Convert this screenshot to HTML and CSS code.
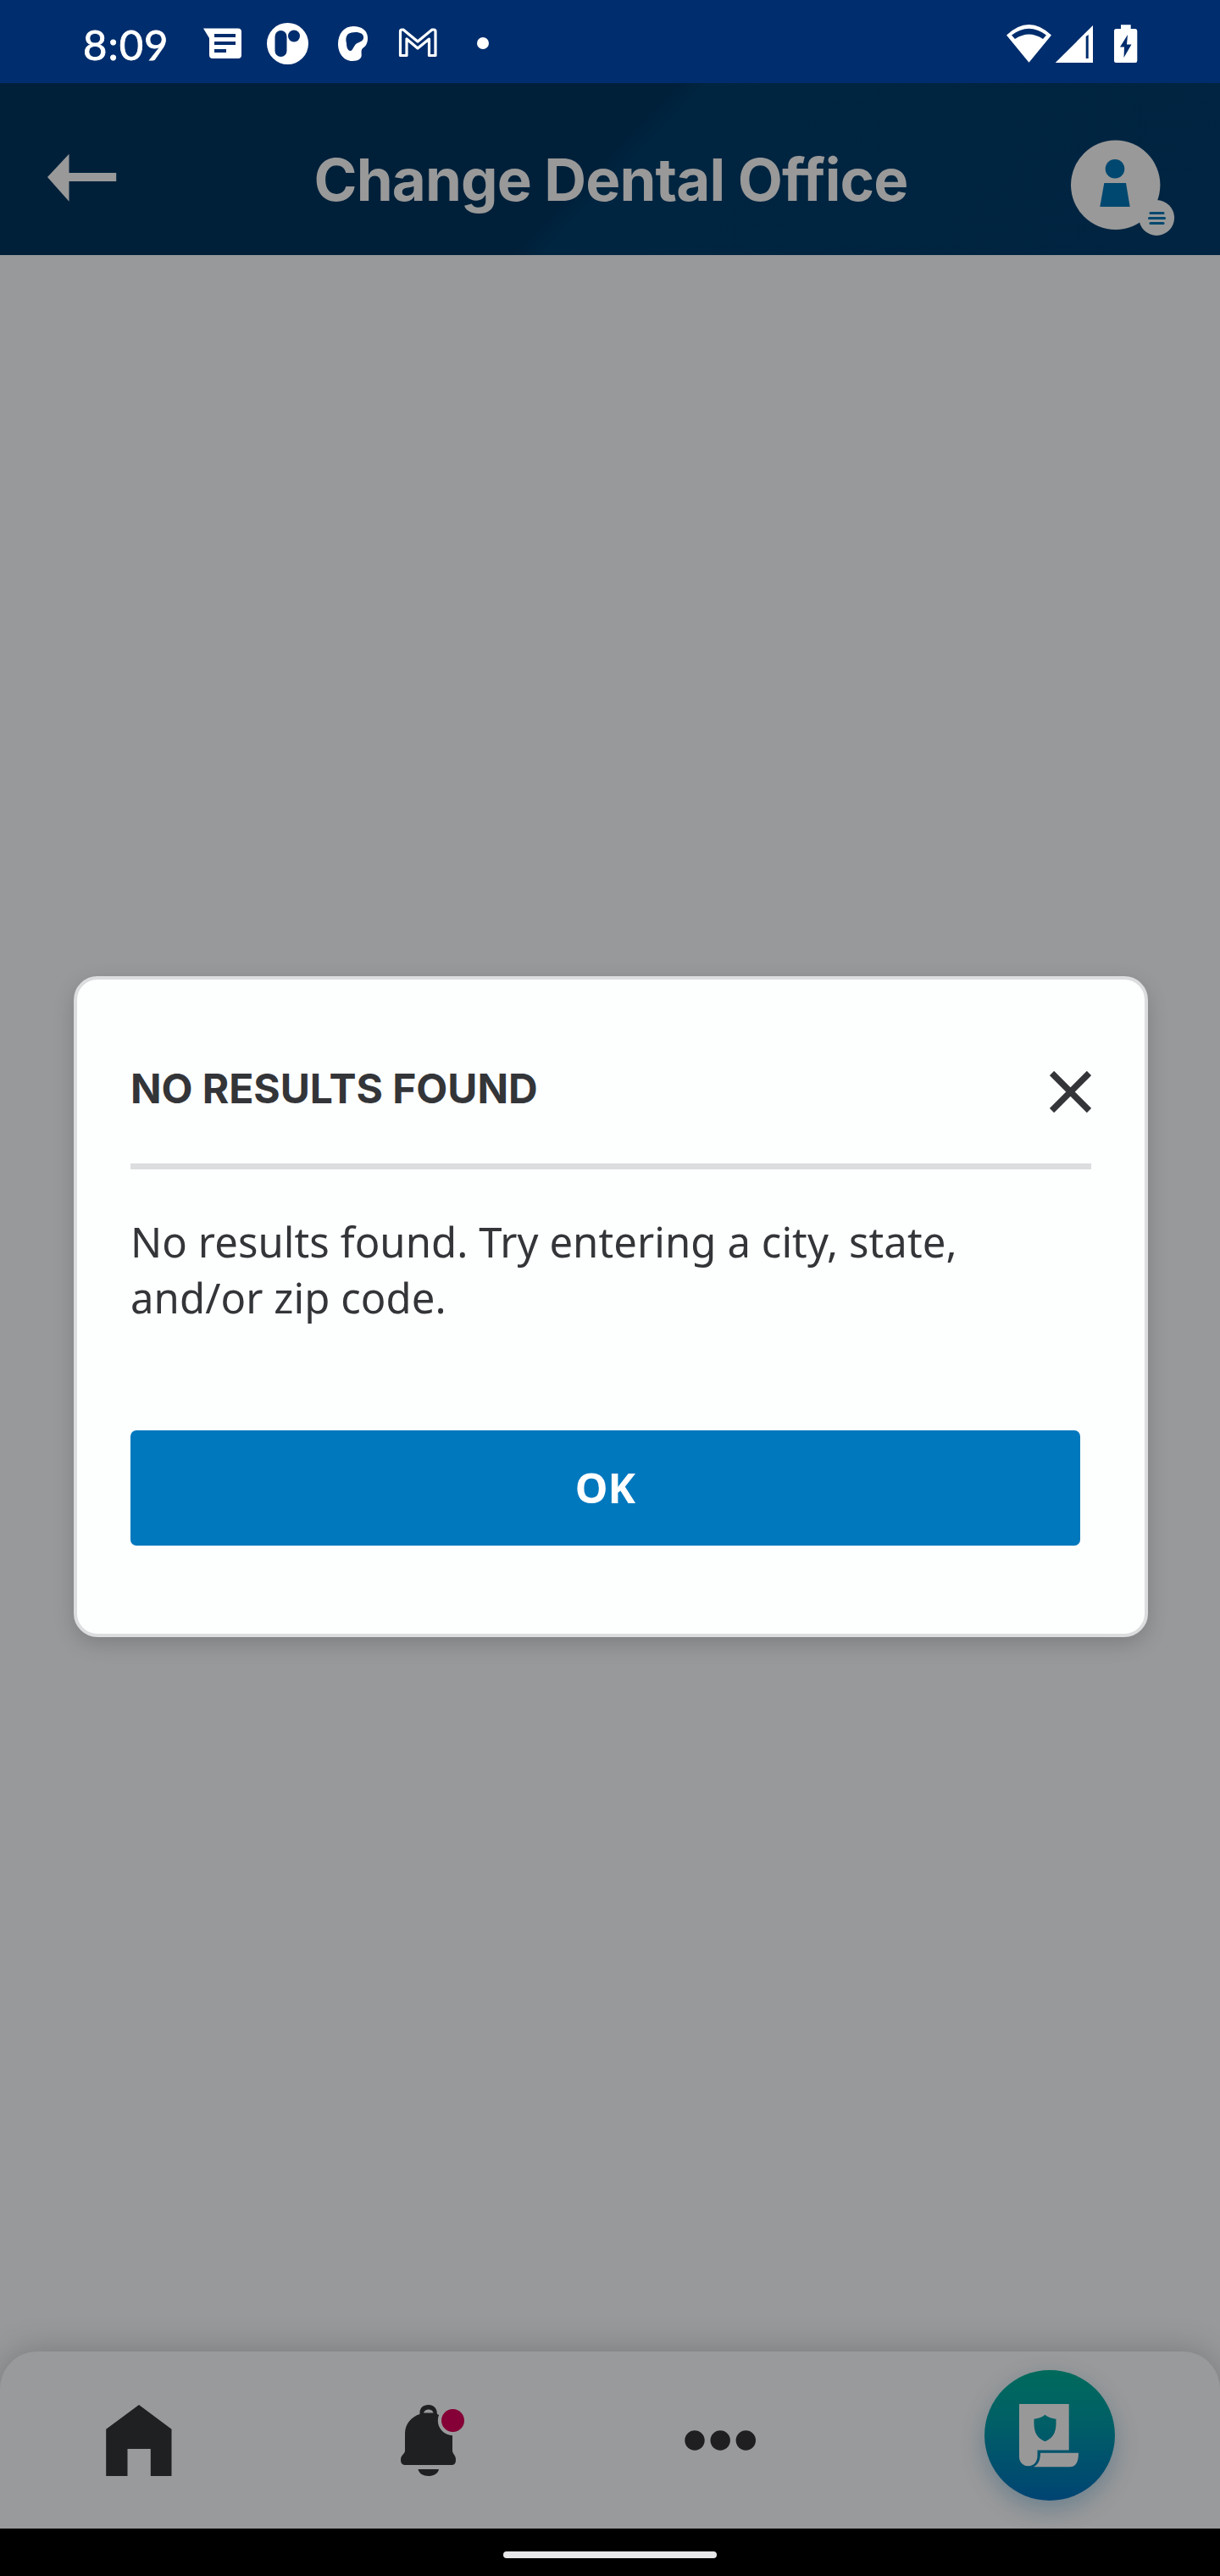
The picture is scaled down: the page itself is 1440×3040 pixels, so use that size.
FILE: index.html
```html
<!DOCTYPE html>
<html lang="en">
<head>
<meta charset="utf-8">
<title>Change Dental Office</title>
<link rel="stylesheet" href="styles.css">
</head>
<body>
<div class="screen">
  <div class="status-bar">
    <span class="clock">8:09</span>
    <svg class="notifications" width="340" height="50" viewBox="240 27 340 50">
      <path fill="#fff" fill-rule="evenodd" d="M240 33.5H281Q285 33.5 285 37.5V65Q285 69 281 69H251Q247 69 247 65V45ZM253 40V44H278V40ZM253 49V53H278V49ZM253 58V62H267V58Z"/>
      <circle cx="339.5" cy="51.5" r="24.5" fill="#fff"/>
      <rect x="324.500" y="36" width="14" height="31" rx="7" fill="#002d6d"/>
      <circle cx="347" cy="42.500" r="7" fill="#002d6d"/>
      <path fill="#fff" fill-rule="evenodd" d="M417 31C427 31 434 36 434 45C434 52 431 55 428 57C425 60 428 65 426 68C424 71 420 72 416 72C405 72 399 62 399 52C399 40 406 31 417 31ZM411 40C408 43 408 47 409 51C409 55 410 59 413 60C416 61 417 55 420 52C424 49 430 49 429 43C428 37 416 37 411 40Z"/>
      <path fill="none" stroke="#fff" stroke-width="3.200" stroke-linejoin="round" d="M472.500 37Q472.500 35 474.500 35H476L493 49L510 35H512Q514 35 514 37V65.500H506.500V46L493 57L480 46V65.500H472.500Z"/>
      <circle cx="570" cy="51" r="7" fill="#fff"/>
    </svg>
    <svg class="signals" width="155" height="46" viewBox="1188 28 155 46">
      <path fill="#fff" fill-rule="evenodd" d="M1188 40.500Q1214.500 15.500 1241 40.500L1214.500 72.700ZM1194 40.500L1198 45Q1214.500 34 1231 45L1235 40.500Q1214.500 25 1194 40.500Z"/>
      <path fill="#fff" fill-rule="evenodd" d="M1290 29V73H1245.700ZM1281.700 42V68H1284.700V40Z"/>
      <path fill="#fff" fill-rule="evenodd" d="M1323 28.300H1334.700V33H1340Q1342.300 33 1342.300 35.500V70.500Q1342.300 73 1340 73H1317.500Q1315 73 1315 70.500V35.500Q1315 33 1317.500 33H1323ZM1331 40L1322 54.500H1327L1326.500 67L1335.500 51.500H1330Z"/>
    </svg>
  </div>

  <header class="app-bar">
    <svg class="back" width="82" height="56" viewBox="56 182 82 56"><path fill="#999" d="M56 209L81.500 181.700V204H137.200V214H81.500V237.700Z"/></svg>
    <h1 class="app-title">Change Dental Office</h1>
    <svg class="avatar" width="123" height="114" viewBox="1264 165 123 114">
      <circle cx="1316.700" cy="218.300" r="52.700" fill="#999"/>
      <circle cx="1316" cy="199.300" r="11.300" fill="#00486f"/>
      <path fill="#00486f" d="M1303.300 216H1329L1333.700 244H1298.300Z"/>
      <circle cx="1365.200" cy="257" r="20.900" fill="#999"/>
      <path stroke="#00486f" stroke-width="3.200" stroke-linecap="round" d="M1358 251.500H1373M1356.500 257.500H1374.500M1358 263.500H1373"/>
    </svg>
  </header>

  <main class="content">
    <section class="dialog">
      <div class="dialog-head">
        <h2 class="dialog-title">NO RESULTS FOUND</h2>
        <svg class="close" width="49" height="49" viewBox="0 0 49 49"><path stroke="#333538" stroke-width="7.500" d="M2.500 2.500L46.500 46.500M46.500 2.500L2.500 46.500"/></svg>
      </div>
      <p class="dialog-text">No results found. Try entering a city, state,<br>and/or zip code.</p>
      <button class="ok">OK</button>
    </section>
  </main>

  <nav class="tabs">
    <svg class="tab-home" width="78" height="84" viewBox="125.500 2838 78 84"><path fill="#1e2022" d="M164.500 2838L203 2866.700V2922H178.300V2890H151V2922H125.700V2866.700Z"/></svg>
    <svg class="tab-bell" width="76" height="84" viewBox="473 2838 76 84">
      <path fill="#1e2022" fill-rule="evenodd" d="M495.500 2849C495 2842 499 2838 505.700 2838C512 2838 516 2842 516 2849C524 2852 534 2860 534 2872V2892C534 2896 538 2897 538 2903Q538 2909 533 2909H478.500Q473 2909 473 2903C473 2897 478 2896 478 2892V2872C478 2860 486 2852 495.500 2849ZM500 2847.500H511.500C510 2842 501.500 2842 500 2847.500Z"/>
      <path fill="#1e2022" d="M493.500 2914H518C517 2919 512 2922 505.700 2922C499.500 2922 494.500 2919 493.500 2914Z"/>
      <circle cx="534.500" cy="2856.500" r="17.700" fill="#999a9b"/>
      <circle cx="534.500" cy="2856.500" r="13.500" fill="#850036"/>
    </svg>
    <svg class="tab-more" width="84" height="24" viewBox="808 2868 84 24"><g fill="#1f1e21"><circle cx="820" cy="2880" r="11.700"/><circle cx="850.200" cy="2880" r="11.700"/><circle cx="880.300" cy="2880" r="11.700"/></g></svg>
    <div class="fab">
      <svg width="70" height="75" viewBox="1203 2836.700 70 75">
        <path fill="#999899" fill-rule="evenodd" d="M1203 2836.700H1261.700V2891.300H1224.500V2898C1224.500 2905 1220 2910 1214 2910C1207 2910 1203 2905 1203 2899ZM1233.500 2849.500C1229 2853 1224 2854 1220.500 2854.500C1220 2868 1222 2876 1233.500 2881C1245 2876 1247 2868 1246.500 2854.500C1243 2854 1238 2853 1233.500 2849.500Z"/>
        <path fill="#999899" d="M1228 2894.500H1273C1273 2905 1270 2911 1263 2911H1220C1226 2908 1228 2902 1228 2894.500Z"/>
      </svg>
    </div>
  </nav>
  <div class="gesture-bar"><div class="gesture-pill"></div></div>
</div>
</body>
</html>
```

FILE: styles.css
```css
* { box-sizing: border-box; }
body { margin: 0; background: #98999b; }
.screen {
  width: 1440px;
  height: 3040px;
  display: flex;
  flex-direction: column;
  overflow: hidden;
  background: #98999b;
}

.status-bar {
  height: 98px;
  flex: none;
  display: flex;
  align-items: center;
  padding: 6px 97px 0 98px;
  background: #002d6d;
}
.clock {
  width: 142px;
  font: 400 49px/58px Lato, sans-serif;
  letter-spacing: 1px;
  -webkit-text-stroke: 0.8px #fff;
  color: #fff;
}
.signals { margin-left: auto; }

.app-bar {
  height: 203px;
  flex: none;
  display: flex;
  align-items: center;
  justify-content: space-between;
  padding: 24px 53px 0 56px;
  background:
    linear-gradient(134deg, #00203a 0, #00203a 49%, #002540 51%, #002441 100%);
}
.back { margin-top: -4px; }
.app-title {
  margin: 0 0 0 40px;
  font: 700 69px/84px Inter, sans-serif;
  letter-spacing: -0.9px;
  color: #999;
  white-space: nowrap;
}
.avatar { margin-top: 20px; }

.content {
  flex: 1;
  display: flex;
  flex-direction: column;
  align-items: center;
  padding: 851px 0 0 2px;
}
.dialog {
  width: 1268px;
  height: 780px;
  padding: 105px 63px 0;
  border: 4px solid #dcdddf;
  border-radius: 28px;
  background: #fdfefe;
  box-shadow: 0 8px 24px rgba(0, 0, 0, .17);
}
.dialog-head {
  height: 119px;
  display: flex;
  justify-content: space-between;
  align-items: flex-start;
  border-bottom: 7px solid #dcdddf;
}
.dialog-title {
  margin: -5px 0 0;
  font: 700 48px/58px Inter, sans-serif;
  letter-spacing: -0.05px;
  color: #333538;
}
.close { margin-top: 3px; }
.dialog-text {
  margin: 52px 0 0;
  height: 132px;
  font: 400 49px/66px "Noto Sans", sans-serif;
  letter-spacing: 0.08px;
  color: #333538;
  white-space: nowrap;
}
.ok {
  display: block;
  width: 1121px;
  height: 136px;
  margin: 124px 0 0;
  padding: 0 0 2px;
  border: 0;
  border-radius: 7px;
  background: #0078be;
  color: #fff;
  font: 700 49px/66px "Noto Sans", sans-serif;
}

.tabs {
  height: 209px;
  flex: none;
  display: flex;
  align-items: center;
  padding: 1px 124px 0 125px;
  border-radius: 44px 44px 0 0;
  background: #999a9b;
  box-shadow: 0 0 40px rgba(0, 0, 0, .22);
}
.tab-bell { margin-left: 270px; }
.tab-more { margin-left: 259px; }
.fab {
  width: 154px;
  height: 154px;
  margin: -12px 0 0 auto;
  padding: 40px 0 0 41px;
  border-radius: 50%;
  background: linear-gradient(#006a5c, #005f66 40%, #00516d 70%, #004473);
  box-shadow: 0 10px 28px rgba(0, 70, 110, .3);
}
.fab svg { display: block; }

.gesture-bar {
  height: 56px;
  flex: none;
  display: flex;
  justify-content: center;
  padding-top: 27px;
  background: #000;
}
.gesture-pill {
  width: 252px;
  height: 8px;
  border-radius: 4px;
  background: #e8e8ea;
}
```
